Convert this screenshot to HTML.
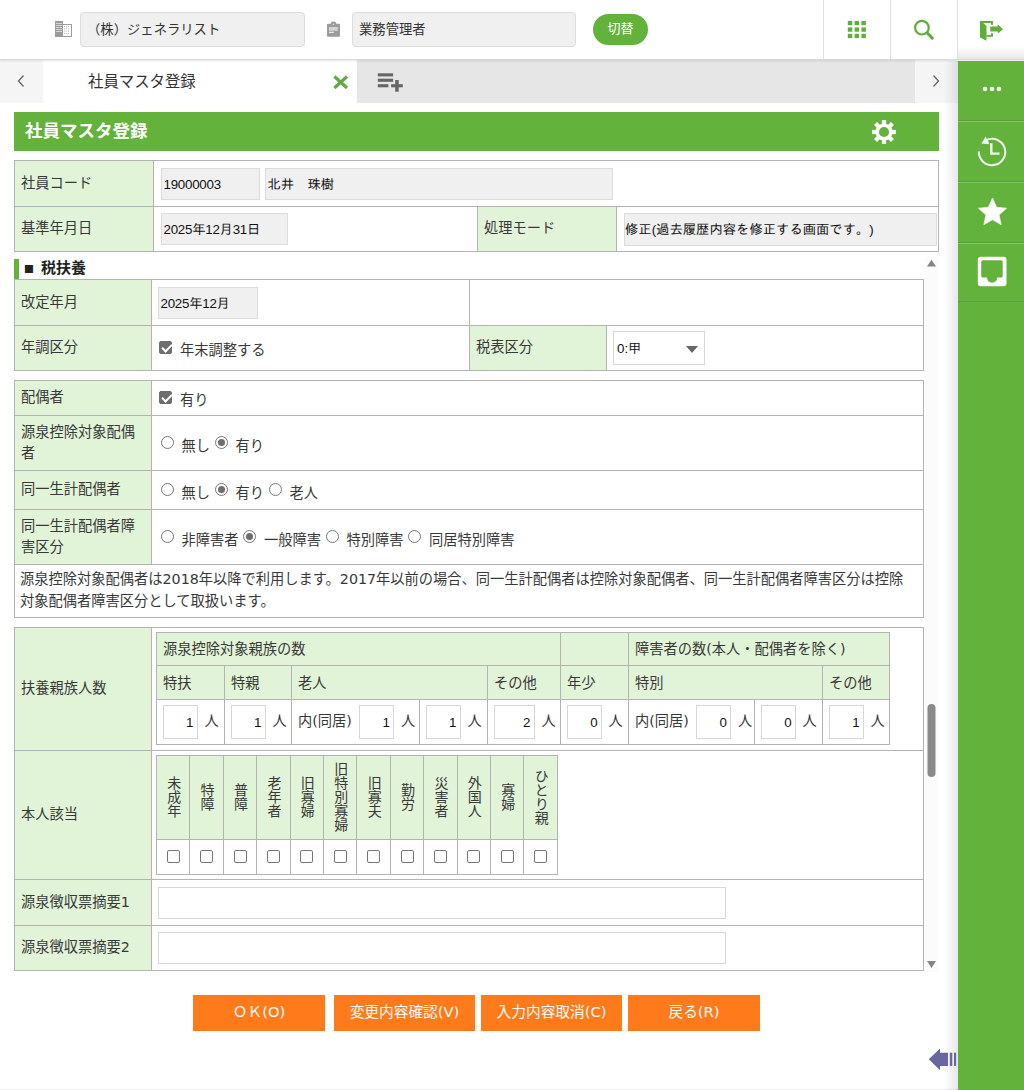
<!DOCTYPE html>
<html lang="ja">
<head>
<meta charset="utf-8">
<title>社員マスタ登録</title>
<style>
*{box-sizing:border-box;}
html,body{margin:0;padding:0;}
body{width:1024px;height:1090px;position:relative;overflow:hidden;background:#fff;
  font-family:"DejaVu Sans","Noto Sans CJK JP",sans-serif;font-size:14.25px;color:#383838;}
.abs{position:absolute;}
.go{font-family:"Liberation Sans","IPAGothic",sans-serif;}
.go.d{letter-spacing:-.25px;}

/* header */
#hdr{left:0;top:0;width:1024px;height:60px;background:#fff;border-bottom:1px solid #d9d9d9;box-shadow:0 1px 2px rgba(0,0,0,.10);z-index:5;}
.hinp{position:absolute;top:12px;height:35px;background:#f0f0f0;border:1px solid #dcdcdc;border-radius:4px;
  font-size:13.33px;line-height:33px;padding-left:6px;color:#333;}
#sw{left:593px;top:14px;width:55px;height:31px;border-radius:16px;background:#62b23c;color:#fff;font-size:13px;line-height:30px;text-align:center;}
.vsep{position:absolute;top:0;width:1px;height:59px;background:#e0e0e0;}

/* tab bar */
#tabs{left:0;top:60px;width:958px;height:43px;background:#e6e6e6;}
#tabs .arr{position:absolute;top:0;width:43px;height:43px;background:#f5f5f5;}
#tab1{position:absolute;left:43px;top:0;width:314px;height:43px;background:#fff;font-size:15.4px;line-height:45px;padding-left:45px;color:#333;}

/* sidebar */
#side{left:958px;top:61px;width:66px;height:1029px;background:#62b23c;z-index:6;}
#side .ln{position:absolute;left:0;width:66px;height:1px;background:#84c768;}
#side .ln.dk{background:#5aa03c;}

/* title */
#ttl{left:14px;top:112px;width:925px;height:39px;background:#62b23c;color:#fff;font-weight:bold;font-size:17.5px;line-height:38px;padding-left:11px;}

table{border-collapse:collapse;table-layout:fixed;}
.ft{position:absolute;}
.ft td{border:1px solid #b3b3b3;padding:0;vertical-align:middle;background:#fff;font-size:14.25px;}
.ft td.l{background:#e2f4d8;padding:0 0 1px 6px;line-height:21px;}
.inp{display:inline-block;vertical-align:middle;background:#f0f0f0;border:1px solid #dcdcdc;height:32px;line-height:31px;font-size:13.33px;padding-left:1.5px;color:#111;white-space:pre;}
.winp{display:inline-block;vertical-align:middle;background:#fff;border:1px solid #d6d6d6;height:32px;}

#sec{left:14px;top:259px;height:20px;border-left:5px solid #62b23c;padding-left:5px;font-weight:bold;font-size:15px;line-height:19px;color:#222;}

.cb{display:inline-block;width:13px;height:13px;border:1px solid #767676;border-radius:2px;background:#fff;vertical-align:middle;position:relative;top:-1px;}
.vt .cb{top:-2px;}
.cb.on{background:#6e6e6e;border-color:#6e6e6e;}
.cb.on:after{content:"";position:absolute;left:3.5px;top:0.5px;width:4px;height:8px;border:solid #fff;border-width:0 2px 2px 0;transform:rotate(45deg);}
.rb{display:inline-block;width:13px;height:13px;border:1px solid #767676;border-radius:50%;background:#fff;vertical-align:middle;position:relative;top:-0.5px;}
.rb.on:after{content:"";position:absolute;left:2px;top:2px;width:7px;height:7px;border-radius:50%;background:#6e6e6e;}

.btn{position:absolute;top:995px;height:36px;background:#ff7a1a;color:#fff;font-size:14.7px;line-height:34px;text-align:center;}

.ct{margin-left:8px;vertical-align:middle;position:relative;top:0;}
td.r{padding-left:8.5px;}
.rt{margin-left:8px;margin-right:4.5px;vertical-align:middle;position:relative;top:1px;}
.ft td.note{padding:4px 6px 0 5px;line-height:21.5px;vertical-align:top;}
.it td{border:1px solid #b3b3b3;font-size:14.25px;padding:0;}
.it td.h{background:#e2f4d8;padding:0 0 3px 6px;}
.it td.n{padding-left:6px;white-space:nowrap;}
.ni{display:inline-block;vertical-align:middle;width:35px;height:34px;border:1px solid #d6d6d6;background:#fff;text-align:right;padding-right:3.5px;line-height:33px;font-size:13.33px;margin-right:6.5px;color:#111;}
.ni.m{margin-left:7.5px;}
.vt td{text-align:center;}
.vt td.h{padding:2px 0 0 0;}
.vt td.h span{writing-mode:vertical-rl;line-height:14px;font-size:14px;letter-spacing:0;}
.sel{position:relative;line-height:31px;font-size:13.33px;padding-left:3px;color:#111;}
.sel i{position:absolute;right:6px;top:14px;width:0;height:0;border:6px solid transparent;border-top:7px solid #666;border-bottom:0;}
#sec .sq{font-size:10.5px;display:inline-block;width:17px;position:relative;top:-1.5px;}
</style>
</head>
<body>

<!-- HEADER -->
<div id="hdr" class="abs">
  <svg class="abs" style="left:0;top:0" width="1024" height="59" viewBox="0 0 1024 59">
    <!-- company -->
    <rect x="55" y="21" width="8" height="16" fill="#9b9b9b"/>
    <path d="M56 23.5h6M56 25.5h6M56 27.5h6M56 29.5h6M56 31.5h6" stroke="#d6d6d6" stroke-width="1"/>
    <rect x="62.5" y="24.5" width="9" height="12" fill="#fff" stroke="#9b9b9b"/>
    <path d="M64.5 26v8M66.5 26v8M68.5 26v8" stroke="#b5b5b5" stroke-width="1" stroke-dasharray="1 1.3"/>
    <!-- role -->
    <rect x="327" y="23.7" width="13" height="13.1" rx="1" fill="#9b9b9b"/>
    <path d="M330.8 24.5v-0.8a2.7 2.2 0 0 1 5.4 0v0.8z" fill="#9b9b9b"/>
    <circle cx="333.4" cy="24.2" r="0.8" fill="#e6e6e6"/>
    <rect x="329" y="27" width="8.8" height="3.8" fill="#d4d4d4"/>
    <rect x="329" y="31.7" width="4.8" height="1.3" fill="#ececec"/>
    <!-- grid -->
    <g fill="#5fae3a">
      <rect x="847.8" y="20.9" width="4.5" height="4.3"/><rect x="854.6" y="20.9" width="4.5" height="4.3"/><rect x="861.4" y="20.9" width="4.5" height="4.3"/>
      <rect x="847.8" y="27.4" width="4.5" height="4.3"/><rect x="854.6" y="27.4" width="4.5" height="4.3"/><rect x="861.4" y="27.4" width="4.5" height="4.3"/>
      <rect x="847.8" y="33.8" width="4.5" height="4.3"/><rect x="854.6" y="33.8" width="4.5" height="4.3"/><rect x="861.4" y="33.8" width="4.5" height="4.3"/>
    </g>
    <!-- search -->
    <circle cx="921.9" cy="27.7" r="6.8" fill="none" stroke="#5fae3a" stroke-width="2.2"/>
    <path d="M927.2 33L932.3 38.1" stroke="#5fae3a" stroke-width="3" stroke-linecap="round"/>
    <!-- logout -->
    <g fill="#5fae3a">
      <path d="M980 21H993V24.8H991V23H983.2L986.5 26V40.8L980 37.5z"/>
      <path d="M986.5 35H991V33.3H993V36.8H986.5z"/>
      <path d="M990.2 26.6H997.8V24.3L1003 29.2L997.8 33.6V31.6H990.2z"/>
    </g>
  </svg>
  <div class="hinp" style="left:80px;width:225px;">（株）ジェネラリスト</div>
  <div class="hinp" style="left:352px;width:224px;">業務管理者</div>
  <div id="sw" class="abs">切替</div>
  <div class="abs" style="left:958px;top:46px;width:66px;height:13px;background:linear-gradient(to bottom,rgba(0,0,0,0),rgba(0,0,0,.09))"></div>
  <div class="vsep" style="left:823px"></div>
  <div class="vsep" style="left:890px"></div>
  <div class="vsep" style="left:957px"></div>
</div>

<!-- TAB BAR -->
<div id="tabs" class="abs">
  <div class="arr" style="left:0"><svg class="abs" style="left:16px;top:14px" width="10" height="14" viewBox="0 0 10 14"><path d="M7.5 1.5L2.5 7l5 5.5" fill="none" stroke="#666" stroke-width="1.3"/></svg></div>
  <div id="tab1">社員マスタ登録
  </div>
  <div class="arr" style="left:915px"><svg class="abs" style="left:16px;top:14px" width="10" height="14" viewBox="0 0 10 14"><path d="M2.5 1.5L7.5 7l-5 5.5" fill="none" stroke="#666" stroke-width="1.3"/></svg></div>
</div>

<div class="abs" style="left:944px;top:61px;width:14px;height:1029px;background:linear-gradient(to right,rgba(50,35,50,0),rgba(50,35,50,.04) 40%,rgba(50,35,50,.115));z-index:6"></div>
<div class="abs" style="left:0;top:1089px;width:958px;height:1px;background:#ededed"></div>
<!-- drawer arrow -->
<svg class="abs" style="left:926px;top:1046px;z-index:7" width="32" height="26" viewBox="926 1046 32 26"><g fill="#68679e"><path d="M928.8 1059.3L940 1048.4V1052.7H948V1065.9H940V1070.2z"/><rect x="949.8" y="1052.7" width="2.5" height="13.2"/><rect x="954" y="1052.7" width="2.1" height="13.2"/></g></svg>
<svg class="abs" style="left:330px;top:66px;z-index:2" width="80" height="30" viewBox="330 66 80 30"><path d="M334.4 76.5L347 88M347 76.5L334.4 88" stroke="#62a744" stroke-width="3.1"/><g fill="#666"><rect x="377.8" y="73.3" width="15.3" height="3.1"/><rect x="377.8" y="78.7" width="15.3" height="3.1"/><rect x="377.8" y="84.2" width="10.6" height="3.1"/><rect x="391.1" y="84.2" width="11.7" height="3.1"/><rect x="395.2" y="80" width="3.5" height="11.7"/></g></svg>
<!-- SIDEBAR -->
<div id="side" class="abs">
  <div class="ln dk" style="top:59px"></div><div class="ln" style="top:60px"></div>
  <div class="ln dk" style="top:120px"></div><div class="ln" style="top:121px"></div>
  <div class="ln dk" style="top:181px"></div><div class="ln" style="top:182px"></div>
  <div class="ln dk" style="top:240px"></div>
  <svg class="abs" style="left:0;top:0" width="66" height="245" viewBox="958 61 66 245">
    <g fill="#f3fbef">
      <circle cx="985" cy="89" r="2.3"/><circle cx="992" cy="89" r="2.3"/><circle cx="999" cy="89" r="2.3"/>
    </g>
    <!-- history -->
    <path d="M978.9 151.5A13.2 13.2 0 1 0 986.8 139.9" fill="none" stroke="#f3fbef" stroke-width="2"/>
    <path d="M981.5 143.6L985.6 136.4L989.6 144.2z" fill="#f3fbef"/>
    <path d="M991.3 143.3V153.6H999.5" fill="none" stroke="#f3fbef" stroke-width="2.4"/>
    <!-- star -->
    <path d="M992.5 198L996.6 207.2L1006.6 208.2L999.1 214.9L1001.2 224.7L992.5 219.7L983.8 224.7L985.9 214.9L978.4 208.2L988.4 207.2z" fill="#fff" stroke="#fff" stroke-width="0.6" stroke-linejoin="round"/>
    <!-- inbox -->
    <path fill-rule="evenodd" fill="#fff" d="M981 256.8h22.3a3.2 3.2 0 0 1 3.2 3.2v23.1a3.2 3.2 0 0 1-3.2 3.2H981a3.2 3.2 0 0 1-3.2-3.2V260a3.2 3.2 0 0 1 3.2-3.2z M982.8 260.2a1.6 1.6 0 0 0-1.6 1.6v14.2a1.6 1.6 0 0 0 1.6 1.6h4.2a5.1 5.1 0 0 0 10.2 0h3.9a1.6 1.6 0 0 0 1.6-1.6v-14.2a1.6 1.6 0 0 0-1.6-1.6z"/>
  </svg>
</div>

<!-- TITLE -->
<div id="ttl" class="abs">社員マスタ登録
  <svg class="abs" style="left:856px;top:6px" width="28" height="28" viewBox="-14 -14 28 28"><g fill="#fff"><rect x="-2.1" y="-12" width="4.2" height="24"/><rect x="-2.1" y="-12" width="4.2" height="24" transform="rotate(45)"/><rect x="-2.1" y="-12" width="4.2" height="24" transform="rotate(90)"/><rect x="-2.1" y="-12" width="4.2" height="24" transform="rotate(135)"/><circle r="8.6"/></g><circle r="5.1" fill="#62b23c"/></svg>
</div>

<!-- TABLE 1 -->
<table class="ft" style="left:14px;top:160px;width:925px;">
<colgroup><col style="width:139px"><col style="width:324px"><col style="width:139px"><col></colgroup>
<tr style="height:46px"><td class="l">社員コード</td><td colspan="3" style="padding-left:7px"><span class="inp go d" style="width:99px;margin-right:.5px">19000003</span> <span class="inp go" style="width:348px">北井　珠樹</span></td></tr>
<tr style="height:45px"><td class="l">基準年月日</td><td style="padding-left:7px"><span class="inp go d" style="width:127px">2025年12月31日</span></td><td class="l">処理モード</td><td style="padding-left:7px"><span class="inp go" style="width:313px;padding-left:0;height:33px;line-height:32px">修正(過去履歴内容を修正する画面です。)</span></td></tr>
</table>

<div id="sec" class="abs"><span class="sq">■</span>税扶養</div>

<!-- TABLE 2 -->
<table class="ft" style="left:14px;top:279px;width:910px;">
<colgroup><col style="width:137px"><col style="width:318px"><col style="width:137px"><col></colgroup>
<tr style="height:46px"><td class="l">改定年月</td><td style="padding-left:6px"><span class="inp go d" style="width:100px">2025年12月</span></td><td colspan="2"></td></tr>
<tr style="height:45px"><td class="l">年調区分</td><td style="padding-left:7px"><span class="cb on"></span><span class="ct">年末調整する</span></td><td class="l">税表区分</td><td style="padding-left:6px"><span class="winp go sel" style="width:92px;height:34px;line-height:33px">0:甲<i></i></span></td></tr>
</table>

<!-- TABLE 3 -->
<table class="ft" style="left:14px;top:380px;width:910px;">
<colgroup><col style="width:137px"><col></colgroup>
<tr style="height:35px"><td class="l">配偶者</td><td style="padding-left:7px"><span class="cb on"></span><span class="ct">有り</span></td></tr>
<tr style="height:55px"><td class="l">源泉控除対象配偶<br>者</td><td class="r"><span class="rb"></span><span class="rt">無し</span><span class="rb on"></span><span class="rt">有り</span></td></tr>
<tr style="height:39px"><td class="l">同一生計配偶者</td><td class="r"><span class="rb"></span><span class="rt">無し</span><span class="rb on"></span><span class="rt">有り</span><span class="rb"></span><span class="rt">老人</span></td></tr>
<tr style="height:55px"><td class="l">同一生計配偶者障<br>害区分</td><td class="r"><span class="rb"></span><span class="rt">非障害者</span><span class="rb on"></span><span class="rt">一般障害</span><span class="rb"></span><span class="rt">特別障害</span><span class="rb"></span><span class="rt">同居特別障害</span></td></tr>
<tr style="height:53px"><td colspan="2" class="note">源泉控除対象配偶者は2018年以降で利用します。2017年以前の場合、同一生計配偶者は控除対象配偶者、同一生計配偶者障害区分は控除<br>対象配偶者障害区分として取扱います。</td></tr>
</table>

<!-- TABLE 4 -->
<table class="ft" style="left:14px;top:627px;width:910px;">
<colgroup><col style="width:137px"><col></colgroup>
<tr style="height:123px"><td class="l">扶養親族人数</td><td style="position:relative">
  <table class="it" style="position:absolute;left:4px;top:4px;width:734px;">
  <colgroup><col style="width:68px"><col style="width:67px"><col style="width:128px"><col style="width:68px"><col style="width:73px"><col style="width:68px"><col style="width:126px"><col style="width:68px"><col></colgroup>
  <tr style="height:33px"><td class="h" colspan="5">源泉控除対象親族の数</td><td class="h"></td><td class="h" colspan="3">障害者の数(本人・配偶者を除く)</td></tr>
  <tr style="height:34px"><td class="h">特扶</td><td class="h">特親</td><td class="h" colspan="2">老人</td><td class="h">その他</td><td class="h">年少</td><td class="h" colspan="2">特別</td><td class="h">その他</td></tr>
  <tr style="height:45px"><td class="n"><span class="ni go">1</span>人</td><td class="n"><span class="ni go">1</span>人</td><td class="n">内(同居)<span class="ni go m">1</span>人</td><td class="n"><span class="ni go">1</span>人</td><td class="n"><span class="ni go" style="width:41px">2</span>人</td><td class="n"><span class="ni go">0</span>人</td><td class="n">内(同居)<span class="ni go m">0</span>人</td><td class="n"><span class="ni go">0</span>人</td><td class="n"><span class="ni go">1</span>人</td></tr>
  </table>
</td></tr>
<tr style="height:129px"><td class="l">本人該当</td><td style="position:relative">
  <table class="it vt" style="position:absolute;left:4px;top:4px;width:402px;">
  <tr style="height:84px"><td class="h"><span>未成年</span></td><td class="h"><span>特障</span></td><td class="h"><span>普障</span></td><td class="h"><span>老年者</span></td><td class="h"><span>旧寡婦</span></td><td class="h"><span>旧特別寡婦</span></td><td class="h"><span>旧寡夫</span></td><td class="h"><span>勤労</span></td><td class="h"><span>災害者</span></td><td class="h"><span>外国人</span></td><td class="h"><span>寡婦</span></td><td class="h"><span>ひとり親</span></td></tr>
  <tr style="height:35px"><td><span class="cb"></span></td><td><span class="cb"></span></td><td><span class="cb"></span></td><td><span class="cb"></span></td><td><span class="cb"></span></td><td><span class="cb"></span></td><td><span class="cb"></span></td><td><span class="cb"></span></td><td><span class="cb"></span></td><td><span class="cb"></span></td><td><span class="cb"></span></td><td><span class="cb"></span></td></tr>
  </table>
</td></tr>
<tr style="height:46px"><td class="l">源泉徴収票摘要1</td><td style="padding-left:6px"><span class="winp" style="width:568px"></span></td></tr>
<tr style="height:45px"><td class="l">源泉徴収票摘要2</td><td style="padding-left:6px"><span class="winp" style="width:568px"></span></td></tr>
</table>

<!-- SCROLLBAR -->
<div class="abs" style="left:925px;top:258px;width:13px;height:714px;background:#fbfbfb"></div>
<svg class="abs" style="left:925px;top:258px" width="14" height="714" viewBox="0 0 14 714"><path d="M2 8.6L6.5 1.8L11 8.6z" fill="#858585"/><path d="M2 703L6.5 710L11 703z" fill="#858585"/><rect x="2.5" y="446" width="8" height="73" rx="4" fill="#8a8a8a"/></svg>

<!-- BUTTONS -->
<div class="btn" style="left:193px;width:132px;">ＯＫ(O)</div>
<div class="btn" style="left:334px;width:141px;">変更内容確認(V)</div>
<div class="btn" style="left:481px;width:141px;">入力内容取消(C)</div>
<div class="btn" style="left:628px;width:132px;">戻る(R)</div>

</body>
</html>
